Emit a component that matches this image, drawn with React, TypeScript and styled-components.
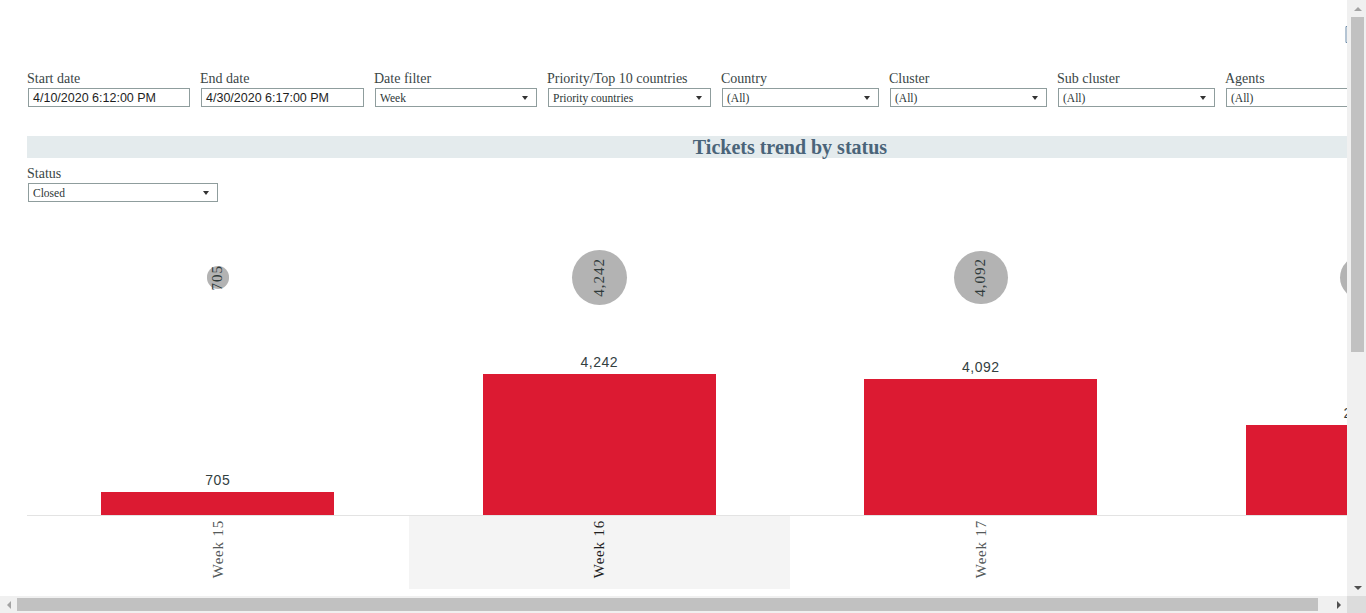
import React from 'react';
import styled, { createGlobalStyle } from 'styled-components';

const GlobalStyle = createGlobalStyle`
  html, body { margin: 0; padding: 0; background: #ffffff; overflow: hidden; }
  #root { width: 1366px; height: 613px; }
`;

const Frame = styled.div`
  width: 1366px;
  height: 613px;
  display: grid;
  grid-template-columns: 1347px 19px;
  grid-template-rows: 596px 17px;
  background: #ffffff;
`;

const Viewport = styled.div`
  overflow: hidden;
`;

const Dashboard = styled.div`
  width: 1526px;
  padding-left: 27px;
  display: flex;
  flex-direction: column;
`;

const TopBar = styled.div`
  width: 1320px;
  height: 71px;
  box-sizing: border-box;
  padding-top: 26px;
  display: flex;
  justify-content: flex-end;
  align-items: flex-start;
`;

const ToolIcon = styled.svg`
  width: 4px;
  height: 17px;
  margin-right: -2px;
  flex: none;
`;

const FilterRow = styled.div`
  display: grid;
  grid-template-columns: 163px 164px 163px 164px 158px 158px 158px 158px;
  column-gap: 10px;
`;

const Filter = styled.div<{ $width?: number }>`
  display: flex;
  flex-direction: column;
  gap: 1px;
  width: ${(p) => (p.$width ? `${p.$width}px` : 'auto')};
`;

const Label = styled.div`
  font-family: 'Liberation Serif', 'Times New Roman', serif;
  font-size: 14px;
  line-height: 16px;
  color: #3a4646;
  white-space: nowrap;
`;

const Box = styled.div`
  margin-left: 1px;
  height: 19px;
  box-sizing: border-box;
  border: 1px solid #8f9d9d;
  background: #ffffff;
  display: flex;
  align-items: center;
  white-space: nowrap;
  overflow: hidden;
`;

const TextBox = styled(Box)`
  padding: 0 4px;
  font-family: 'Liberation Sans', Arial, sans-serif;
  font-size: 12.5px;
  color: #1e1e1e;
`;

const SelectBox = styled(Box)`
  justify-content: space-between;
  padding: 0 8px 0 4px;
  font-family: 'Liberation Serif', 'Times New Roman', serif;
  font-size: 11.5px;
  color: #2c3636;
`;

const Caret = styled.span`
  width: 0;
  height: 0;
  border-left: 3.5px solid transparent;
  border-right: 3.5px solid transparent;
  border-top: 4px solid #333333;
  flex: none;
`;

const TitleBar = styled.div`
  margin-top: 29px;
  height: 22px;
  background: #e4ebed;
  text-align: center;
  font-family: 'Liberation Serif', 'Times New Roman', serif;
  font-weight: bold;
  font-size: 20px;
  line-height: 22px;
  color: #4a6479;
`;

const StatusWrap = styled.div`
  margin-top: 8px;
  display: flex;
`;

const Chart = styled.div`
  display: grid;
  grid-template-columns: repeat(4, 381.5px);
`;

const Column = styled.div`
  display: flex;
  flex-direction: column;
`;

const CircleZone = styled.div`
  height: 151px;
  display: flex;
  align-items: center;
  justify-content: center;
`;

const Bubble = styled.div`
  border-radius: 50%;
  background: #b3b3b3;
  display: flex;
  align-items: center;
  justify-content: center;
  overflow: visible;
  flex: none;
`;

const BubbleText = styled.span`
  writing-mode: vertical-rl;
  transform: rotate(180deg);
  font-family: 'Liberation Serif', 'Times New Roman', serif;
  font-size: 15px;
  letter-spacing: 1px;
  line-height: 15px;
  color: #2f3a3a;
  white-space: nowrap;
`;

const BarZone = styled.div`
  height: 162px;
  border-bottom: 1px solid #e3e3e3;
  display: flex;
  flex-direction: column;
  justify-content: flex-end;
  align-items: center;
`;

const BarValue = styled.div`
  font-family: 'Liberation Sans', Arial, sans-serif;
  font-size: 14px;
  letter-spacing: 0.5px;
  line-height: 16px;
  margin-bottom: 4px;
  color: #33403f;
  white-space: nowrap;
`;

const Bar = styled.div`
  width: 233px;
  background: #dc1a32;
`;

const Header = styled.div<{ $selected?: boolean }>`
  height: 73px;
  box-sizing: border-box;
  padding-top: 4px;
  display: flex;
  justify-content: center;
  align-items: flex-start;
  background: ${(p) => (p.$selected ? '#f4f4f4' : '#ffffff')};
`;

const WeekLabel = styled.span<{ $selected?: boolean }>`
  writing-mode: vertical-rl;
  transform: rotate(180deg);
  font-family: 'Liberation Serif', 'Times New Roman', serif;
  font-size: 15px;
  letter-spacing: 0.8px;
  line-height: 16px;
  color: ${(p) => (p.$selected ? '#1f1f1f' : '#555a5a')};
  white-space: nowrap;
`;

const VScroll = styled.div`
  background: #f0f0f0;
  display: flex;
  flex-direction: column;
`;

const HScroll = styled.div`
  background: #f0f0f0;
  display: flex;
  flex-direction: row;
`;

const ArrowBtn = styled.div`
  width: 17px;
  height: 17px;
  flex: none;
  display: flex;
  align-items: center;
  justify-content: center;
`;

const VArrowBtn = styled(ArrowBtn)`
  width: 19px;
  padding-left: 2px;
  box-sizing: border-box;
`;

const Tri = styled.span<{ $dir: 'up' | 'down' | 'left' | 'right'; $dim?: boolean }>`
  width: 0;
  height: 0;
  ${(p) => {
    const c = p.$dim ? '#a3a3a3' : '#505050';
    switch (p.$dir) {
      case 'up':
        return `border-left: 4px solid transparent; border-right: 4px solid transparent; border-bottom: 4px solid ${c};`;
      case 'down':
        return `border-left: 4px solid transparent; border-right: 4px solid transparent; border-top: 4px solid ${c};`;
      case 'left':
        return `border-top: 4px solid transparent; border-bottom: 4px solid transparent; border-right: 4px solid ${c};`;
      default:
        return `border-top: 4px solid transparent; border-bottom: 4px solid transparent; border-left: 4px solid ${c};`;
    }
  }}
`;

const VThumb = styled.div`
  margin-left: 4px;
  width: 13px;
  height: 335px;
  background: #c1c1c1;
  flex: none;
`;

const HThumb = styled.div`
  margin-top: 2px;
  height: 13px;
  width: 1301px;
  background: #c1c1c1;
  flex: none;
`;

const Spacer = styled.div`
  flex: 1;
`;

const Corner = styled.div`
  background: #dcdcdc;
`;

const filters: { label: string; value: string; kind: 'text' | 'select' }[] = [
  { label: 'Start date', value: '4/10/2020 6:12:00 PM', kind: 'text' },
  { label: 'End date', value: '4/30/2020 6:17:00 PM', kind: 'text' },
  { label: 'Date filter', value: 'Week', kind: 'select' },
  { label: 'Priority/Top 10 countries', value: 'Priority countries', kind: 'select' },
  { label: 'Country', value: '(All)', kind: 'select' },
  { label: 'Cluster', value: '(All)', kind: 'select' },
  { label: 'Sub cluster', value: '(All)', kind: 'select' },
  { label: 'Agents', value: '(All)', kind: 'select' },
];

const weeks = [
  { label: 'Week 15', value: 705 },
  { label: 'Week 16', value: 4242, selected: true },
  { label: 'Week 17', value: 4092 },
  { label: 'Week 18', value: 2708 },
];

const fmt = (n: number) => n.toLocaleString('en-US');

export default function App() {
  return (
    <>
      <GlobalStyle />
      <Frame>
        <Viewport>
          <Dashboard>
            <TopBar>
              <ToolIcon viewBox="0 0 4 17">
                <path d="M3 0.5 H1 V16.5 H3" fill="none" stroke="#6a8aa8" strokeWidth="1" />
              </ToolIcon>
            </TopBar>
            <FilterRow>
              {filters.map((f) => (
                <Filter key={f.label}>
                  <Label>{f.label}</Label>
                  {f.kind === 'text' ? (
                    <TextBox>{f.value}</TextBox>
                  ) : (
                    <SelectBox>
                      <span>{f.value}</span>
                      <Caret />
                    </SelectBox>
                  )}
                </Filter>
              ))}
            </FilterRow>
            <TitleBar>Tickets trend by status</TitleBar>
            <StatusWrap>
              <Filter $width={191}>
                <Label>Status</Label>
                <SelectBox>
                  <span>Closed</span>
                  <Caret />
                </SelectBox>
              </Filter>
            </StatusWrap>
            <Chart>
              {weeks.map((w) => {
                const d = 2 * 0.422 * Math.sqrt(w.value);
                const h = (w.value * 141) / 4242;
                return (
                  <Column key={w.label}>
                    <CircleZone>
                      <Bubble style={{ width: d, height: d }}>
                        <BubbleText>{fmt(w.value)}</BubbleText>
                      </Bubble>
                    </CircleZone>
                    <BarZone>
                      <BarValue>{fmt(w.value)}</BarValue>
                      <Bar style={{ height: h }} />
                    </BarZone>
                    <Header $selected={w.selected}>
                      <WeekLabel $selected={w.selected}>{w.label}</WeekLabel>
                    </Header>
                  </Column>
                );
              })}
            </Chart>
          </Dashboard>
        </Viewport>
        <VScroll>
          <VArrowBtn>
            <Tri $dir="up" $dim />
          </VArrowBtn>
          <VThumb />
          <Spacer />
          <VArrowBtn>
            <Tri $dir="down" />
          </VArrowBtn>
        </VScroll>
        <HScroll>
          <ArrowBtn>
            <Tri $dir="left" $dim />
          </ArrowBtn>
          <HThumb />
          <Spacer />
          <ArrowBtn>
            <Tri $dir="right" />
          </ArrowBtn>
        </HScroll>
        <Corner />
      </Frame>
    </>
  );
}
